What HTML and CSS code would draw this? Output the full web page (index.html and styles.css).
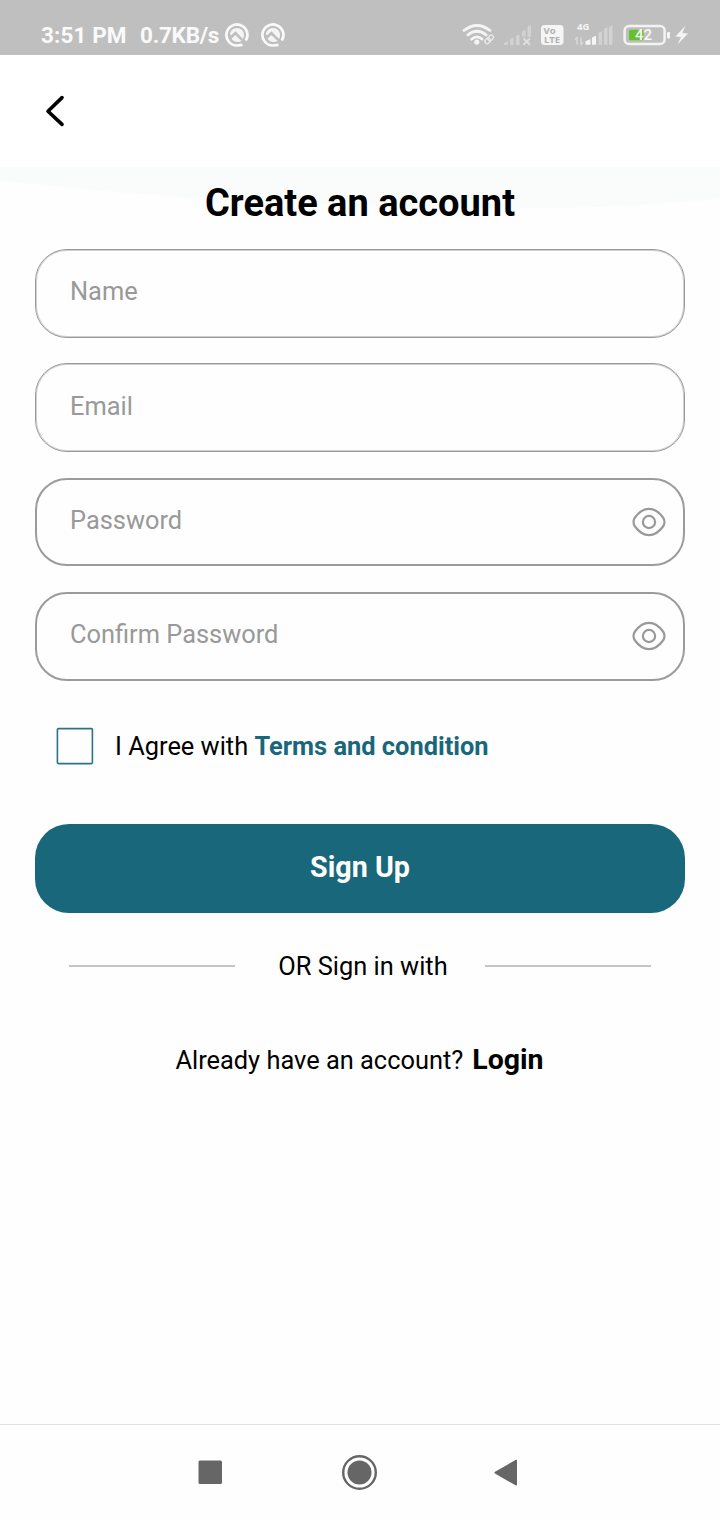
FILE: index.html
```html
<!DOCTYPE html>
<html lang="en">
<head>
<meta charset="utf-8">
<title>Create an account</title>
<link rel="stylesheet" href="styles.css">
</head>
<body>
<svg class="defs" width="0" height="0" aria-hidden="true">
  <symbol id="eye" viewBox="0 0 36 32">
    <path d="M2.500 16C2.500 14.400 2.900 13 4 11.500C7.400 6.800 12.200 2.900 18 2.900S28.600 6.800 32 11.500C33.100 13 33.500 14.400 33.500 16S33.100 19 32 20.500C28.600 25.200 23.800 29.100 18 29.100S7.400 25.200 4 20.500C2.900 19 2.500 17.600 2.500 16Z"/>
    <circle cx="18" cy="16" r="6.100"/>
  </symbol>
  <symbol id="dial" viewBox="0 0 26 26">
    <path class="ring" d="M21.800 18.600A10.500 10.500 0 1 0 13 23.500L18.500 22.800"/>
    <path class="solid" d="M5.900 12.400C6.300 8.800 9.300 6 13 6C17 6 20 9.200 20 13C20 14.500 19.700 15.800 19 17L11.500 9.200L7.200 13.300Z"/>
    <path class="solid" d="M7.500 16.700L11.400 12.900L17.500 18.900C14.300 20.900 9.800 20 7.500 16.700Z"/>
  </symbol>
</svg>

<div class="status">
  <span class="clock">3:51 PM</span>
  <span class="speed">0.7KB/s</span>
  <svg class="dial" width="26" height="26"><use href="#dial"/></svg>
  <svg class="dial" width="26" height="26"><use href="#dial"/></svg>
  <svg class="indicators" width="230" height="30" viewBox="460 20 230 30">
    <g class="wifi">
      <path d="M464 30.500Q477 20.500 490 30.500"/>
      <path d="M467.800 35Q477 27.500 486.200 35"/>
      <path d="M471.500 39.200Q477 34.500 482 39"/>
      <circle class="solid" cx="476.800" cy="42" r="2.600"/>
      <g class="link" transform="rotate(-45 489 39.500)">
        <rect x="484" y="37.300" width="6" height="4.400" rx="2.200"/>
        <rect x="488.300" y="37.300" width="6" height="4.400" rx="2.200"/>
      </g>
    </g>
    <path class="faint" d="M504 45v-2l4-2v4zM510 45v-6l3.500-1.500v7.500zM516 45v-9l3.500-1.500v10.500zM522 36.500v-5l3.500-2v7zM527.500 37v-10l3.500-2v12z"/>
    <path class="cross" d="M523.500 38.500l6.500 6.200m0-6.200l-6.500 6.200"/>
    <rect class="solid" x="541" y="25" width="22.500" height="20" rx="3.500"/>
    <text class="volte"><tspan x="543.500" y="34">Vo</tspan><tspan x="544" y="43">LTE</tspan></text>
    <text class="net" x="577" y="30.300">4G</text>
    <path class="arrows" d="M577 44.500v-7l-2 2M581 37.500v7l2-2"/>
    <path class="solid" d="M585.500 44.800v-3.500l5-2v5.500zM592 44.800v-7.300l4-1.700v9z"/>
    <path class="faint" d="M598.500 44.800v-12l3.500-1.500v13.500zM604 44.800v-16l3.500-1.500v17.500zM609 44.800v-17.300l3.500-2.500v19.800z"/>
    <rect class="cell" x="624.600" y="26" width="40" height="18" rx="4.500"/>
    <rect class="solid" x="667" y="32" width="3" height="6.500" rx="1"/>
    <rect class="charge" x="629" y="29.800" width="14.500" height="10.500" rx="1.500"/>
    <text class="percent" x="635" y="40.300">42</text>
    <path class="solid" d="M685.500 25.500L675.500 36.500L681 37L677.500 44.500L688 33.500L682.300 33Z"/>
  </svg>
</div>

<header class="topbar">
  <svg width="24" height="34" viewBox="0 0 24 34"><path d="M19 3.600L5 17.200L19 30.400"/></svg>
</header>

<main class="page">
  <svg class="wave" width="720" height="42" viewBox="0 0 720 42"><path d="M0 0H720V32C650 39 570 41.700 510 41.500C330 41 180 33 0 13.700Z"/></svg>
  <h1 class="title">Create an account</h1>
  <form class="fields">
    <div class="field"><span>Name</span></div>
    <div class="field"><span>Email</span></div>
    <div class="field strong"><span>Password</span><svg class="eye" width="36" height="32"><use href="#eye"/></svg></div>
    <div class="field strong"><span>Confirm Password</span><svg class="eye" width="36" height="32"><use href="#eye"/></svg></div>
  </form>
  <div class="agree">
    <svg class="box" width="38" height="38" viewBox="0 0 38 38"><rect x="1.400" y="1.600" width="35" height="35" rx="1"/></svg>
    <span class="agree-text">I Agree with <b>Terms and condition</b></span>
  </div>
  <div class="submit">Sign Up</div>
  <div class="divider"><i></i><span>OR Sign in with</span><i></i></div>
  <p class="login"><span>Already have an account?</span><b>Login</b></p>
</main>

<nav class="navbar">
  <svg width="720" height="94" viewBox="0 1425 720 94">
    <rect x="198.500" y="1460.500" width="23.500" height="23.500" rx="1.500"/>
    <circle cx="359.500" cy="1472.500" r="12"/>
    <circle class="outer" cx="359.500" cy="1472.500" r="16.300"/>
    <path d="M495 1471.700L515.500 1460Q517 1459.200 517 1461V1484.500Q517 1486.200 515.500 1485.300L495 1473.500Q493.700 1472.600 495 1471.700Z"/>
  </svg>
</nav>
</body>
</html>
```
FILE: styles.css
```css
* { box-sizing: border-box; }
body {
  margin: 0;
  width: 720px;
  height: 1520px;
  display: flex;
  flex-direction: column;
  background: #fefefe;
  color: #000;
  font-family: Roboto, "Liberation Sans", sans-serif;
  overflow: hidden;
}
svg { display: block; flex: none; }
.defs { position: absolute; }

.status {
  height: 55px;
  flex: none;
  display: flex;
  align-items: center;
  padding: 14px 30px 0 41px;
  background: #bfbfbf;
  color: #fafafa;
  font-size: 22.500px;
  font-weight: 700;
  white-space: nowrap;
}
.clock { width: 99px; letter-spacing: 0.100px; }
.speed { width: 84px; letter-spacing: -0.250px; }
.dial { margin-right: 10px; }
.ring { fill: none; stroke: #fafafa; stroke-width: 2.700; }
.solid { fill: #f5f5f5; stroke: none; }
.indicators { margin-left: auto; }
.wifi { fill: none; stroke: #f5f5f5; stroke-width: 2.700; stroke-linecap: round; }
.link { stroke: #e8e8e8; stroke-width: 1.400; }
.faint { fill: #d2d2d2; }
.cross { stroke: #dedede; stroke-width: 2; }
.volte { fill: #b0b0b0; font: 700 9.500px/1 "Open Sans", sans-serif; }
.net { fill: #f5f5f5; font: 700 9.500px/1 "Open Sans", sans-serif; }
.arrows { fill: none; stroke: #dcdcdc; stroke-width: 1.300; }
.cell { fill: none; stroke: #f3f3f3; stroke-width: 2.500; }
.charge { fill: #65c22e; }
.percent { fill: #f8f8f8; font: 500 15px/1 Roboto, sans-serif; }

.topbar { height: 112px; flex: none; padding: 39px 0 0 43px; background: #fff; }
.topbar path { fill: none; stroke: #000; stroke-width: 3.600; stroke-linecap: round; stroke-linejoin: round; }

.page {
  position: relative;
  flex: 1;
  display: flex;
  flex-direction: column;
  padding: 0 35px;
}
.wave { position: absolute; left: 0; top: 0; fill: #fafcfb; }
.title {
  position: relative;
  margin: 14px 0 24px;
  height: 44px;
  font-size: 38px;
  line-height: 44px;
  font-weight: 700;
  text-align: center;
}
.fields { display: flex; flex-direction: column; gap: 25.330px; }
.field {
  height: 89px;
  display: flex;
  align-items: center;
  justify-content: space-between;
  padding: 0 16px 0 34px;
  border: 1px solid #999;
  box-shadow: inset 0 0 0 1px #d0d0d0;
  border-radius: 32px;
  color: #999;
  font-size: 25.400px;
}
.field span { padding-bottom: 4px; }
.field:first-child span { padding-bottom: 5px; }
.field.strong { border-width: 2px; border-color: #9b9b9b; box-shadow: none; height: 88.600px; padding: 0 16px 0 33px; }
.field.strong:last-child { margin-top: 0.400px; }
.eye { fill: none; stroke: #999; stroke-width: 2.200; }

.agree { display: flex; align-items: center; margin-top: 46.400px; padding-left: 21px; height: 38px; font-size: 25.400px; }
.box { margin-right: 21px; fill: none; stroke: #2a7486; stroke-width: 1.600; }
.agree b { color: #18677a; }

.submit {
  margin-top: 59px;
  height: 89px;
  border-radius: 34px;
  background: #18677a;
  color: #fff;
  font-size: 28.700px;
  line-height: 86px;
  font-weight: 700;
  text-align: center;
}
.divider {
  display: flex;
  align-items: center;
  justify-content: space-between;
  margin-top: 37px;
  padding: 0 34px;
  height: 32px;
  font-size: 25.400px;
}
.divider i { width: 166px; height: 2px; background: #c3c5c4; }
.divider span { padding-left: 6px; }
.login {
  display: flex;
  justify-content: center;
  align-items: baseline;
  gap: 9px;
  margin: 61px 1px 0 0;
  line-height: 34px;
  font-size: 25.400px;
}
.login b { font-size: 28.500px; }

.navbar { height: 96px; flex: none; border-top: 1px solid #e2e2e2; }
.navbar svg { fill: #666; }
.navbar .outer { fill: none; stroke: #666; stroke-width: 2.400; }
```
